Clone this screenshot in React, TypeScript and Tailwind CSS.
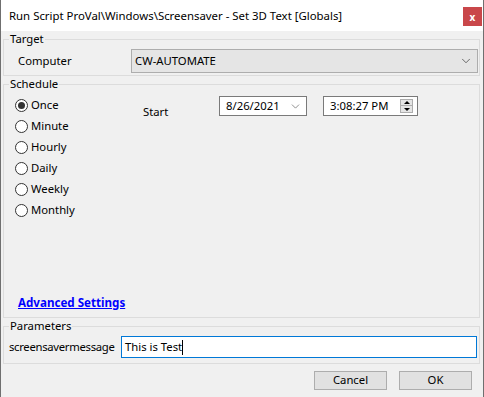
import { ChevronDown } from "lucide-react";

const Radio = ({ label, checked }: { label: string; checked?: boolean }) => (
  <div className="flex h-[21px] items-center">
    <div className="flex h-[13px] w-[13px] items-center justify-center rounded-full border border-[#333] bg-white">
      {checked && <div className="h-[7px] w-[7px] rounded-full bg-[#333]" />}
    </div>
    <span className="ml-[3px]">{label}</span>
  </div>
);

export default function App() {
  const schedules = ["Once", "Minute", "Hourly", "Daily", "Weekly", "Monthly"];

  return (
    <div
      className="flex h-[397px] w-[484px] flex-col border-x border-[#6f6f6f] bg-[#f0f0f0] text-[11.3px] text-black"
      style={{ fontFamily: '"Noto Sans", "Segoe UI", sans-serif' }}
    >
      {/* title bar */}
      <div className="flex h-[31px] items-center justify-between bg-white pl-[8px] pr-[1px]">
        <span className="text-[11.4px]">Run Script ProVal\Windows\Screensaver - Set 3D Text [Globals]</span>
        <div className="mt-[2px] flex h-[19px] w-[19px] items-center justify-center bg-[#c9474a] text-[10px] font-bold leading-none text-white">
          x
        </div>
      </div>

      {/* Target */}
      <fieldset className="mx-[2px] mr-[3px] border border-[#dcdcdc] pb-[2px]">
        <legend className="ml-[5px] px-[1px] leading-[16px]">Target</legend>
        <div className="flex items-center pt-[2px]">
          <span className="ml-[14px] w-[113px]">Computer</span>
          <div className="flex h-[24px] flex-1 items-center justify-between border border-[#adadad] bg-[#e5e5e5] pl-[3px] pr-[4px]">
            <span>CW-AUTOMATE</span>
            <ChevronDown size={14} strokeWidth={1.2} className="text-[#333]" />
          </div>
          <div className="w-[1px]" />
        </div>
      </fieldset>

      {/* Schedule */}
      <fieldset className="mx-[2px] mr-[3px] border border-[#dcdcdc]">
        <legend className="ml-[5px] px-[1px] leading-[16px]">Schedule</legend>
        <div className="flex h-[225px] flex-col justify-between pb-[6px]">
          <div className="flex pt-[3px]">
            <div className="ml-[11px] flex w-[128px] flex-col">
              {schedules.map((s, i) => (
                <Radio key={s} label={s} checked={i === 0} />
              ))}
            </div>
            <div className="flex h-[21px] w-[76px] items-center pt-[14px]">Start</div>
            <div className="mt-[1px] flex h-[20px] w-[88px] items-center justify-between border border-[#7a7a7a] bg-white pl-[6px] pr-[4px]">
              <span>8/26/2021</span>
              <ChevronDown size={13} strokeWidth={1.2} className="text-[#555]" />
            </div>
            <div className="ml-[16px] mt-[1px] flex h-[20px] w-[95px] items-center justify-between border border-[#7a7a7a] bg-white pl-[6px] pr-[4px]">
              <span>3:08:27 PM</span>
              <div className="flex flex-col">
                <div className="flex h-[7px] w-[13px] items-center justify-center border border-[#adadad] bg-[#e5e5e5]">
                  <div className="h-0 w-0 border-x-[3px] border-b-[3px] border-x-transparent border-b-black" />
                </div>
                <div className="flex h-[7px] w-[13px] items-center justify-center border border-t-0 border-[#adadad] bg-[#e5e5e5]">
                  <div className="h-0 w-0 border-x-[3px] border-t-[3px] border-x-transparent border-t-black" />
                </div>
              </div>
            </div>
          </div>
          <a className="ml-[14px] text-[11.6px] font-bold text-[#0000ff] underline">Advanced Settings</a>
        </div>
      </fieldset>

      {/* Parameters */}
      <fieldset className="mx-[2px] mr-[3px] border border-[#dcdcdc] pb-[5px]">
        <legend className="ml-[5px] px-[1px] leading-[16px]">Parameters</legend>
        <div className="flex items-center pt-[2px]">
          <span className="ml-[5px] w-[112px] tracking-[-0.3px]">screensavermessage</span>
          <div className="flex h-[22px] flex-1 items-center border border-[#0078d7] bg-white pl-[3px]">
            <span>This is Test</span>
            <span className="h-[15px] w-[1px] bg-black" />
          </div>
          <div className="w-[2px]" />
        </div>
      </fieldset>

      {/* buttons */}
      <div className="flex flex-1 items-start justify-end gap-[12px] pr-[11px] pt-[7px]">
        <button className="h-[19px] w-[73px] border border-[#adadad] bg-[#e1e1e1]">Cancel</button>
        <button className="h-[19px] w-[73px] border border-[#adadad] bg-[#e1e1e1]">OK</button>
      </div>
    </div>
  );
}
